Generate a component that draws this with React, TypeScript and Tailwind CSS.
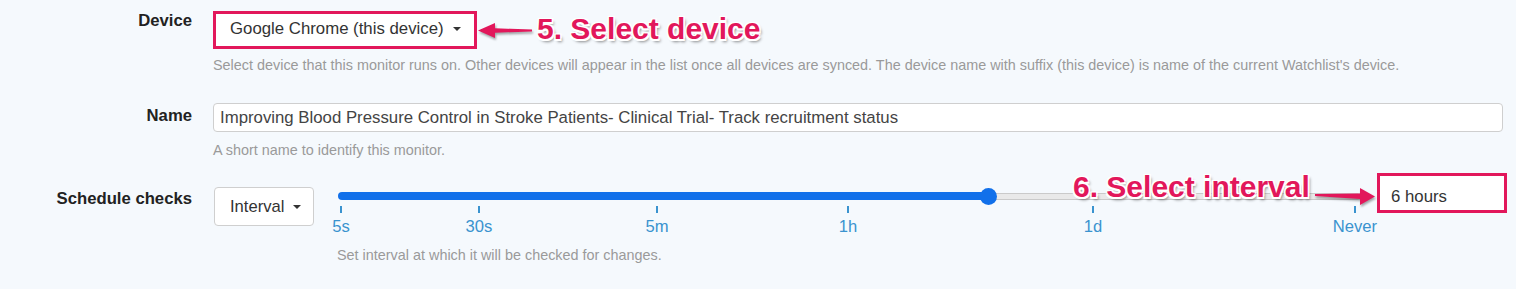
import React from "react";

const PINK = "border-[#e2175b]";

const ticks = [
  { label: "5s", x: 7 },
  { label: "30s", x: 145 },
  { label: "5m", x: 323 },
  { label: "1h", x: 514 },
  { label: "1d", x: 759 },
  { label: "Never", x: 1021 },
];

const THUMB = 654;

const Caret = () => (
  <span className="inline-block ml-[9px] w-0 h-0 border-t-[4.5px] border-t-[#333] border-x-[4px] border-x-transparent" />
);

const annotation =
  "absolute font-bold text-[#e2175b] leading-none whitespace-nowrap [text-shadow:-1.5px_-1.5px_0_#fff,1.5px_-1.5px_0_#fff,-1.5px_1.5px_0_#fff,1.5px_1.5px_0_#fff,0_-1.5px_0_#fff,0_1.5px_0_#fff,2px_3px_3px_rgba(0,0,0,0.45)]";

export default function App() {
  return (
    <div className="relative w-[1516px] h-[289px] overflow-hidden bg-[#f5f9fd] font-['Liberation_Sans',Arial,sans-serif] text-[#333]">
      {/* Device */}
      <div className="flex items-start pt-[11px]">
        <div className="w-[192px] text-right text-[16.7px] font-bold leading-[20px] text-[#222]">
          Device
        </div>
        <div className="ml-[21px]">
          <div className={`flex h-[38px] w-[264px] items-start border-[3px] ${PINK} bg-white pl-[14px] pt-[5px]`}>
            <span className="flex items-center text-[16.8px] leading-[20px] text-[#333]">
              Google Chrome (this device)
              <Caret />
            </span>
          </div>
          <p className="mt-[7px] text-[14.4px] leading-[18px] text-[#9a9a9a] whitespace-nowrap">
            Select device that this monitor runs on. Other devices will appear in the list once all devices are synced. The device name with suffix (this device) is name of the current Watchlist's device.
          </p>
        </div>
      </div>

      {/* Name */}
      <div className="mt-[29px] flex items-start">
        <div className="mt-[2.5px] w-[192px] text-right text-[16.7px] font-bold leading-[20px] text-[#222]">
          Name
        </div>
        <div className="ml-[21px]">
          <input
            readOnly
            value="Improving Blood Pressure Control in Stroke Patients- Clinical Trial- Track recruitment status"
            className="block h-[29px] w-[1290px] rounded-[4px] border border-[#cfcfcf] bg-white px-[6px] pt-[1px] text-[16.8px] text-[#444] outline-none"
          />
          <p className="mt-[9px] text-[14.4px] leading-[18px] text-[#9a9a9a]">
            A short name to identify this monitor.
          </p>
        </div>
      </div>

      {/* Schedule checks */}
      <div className="mt-[14px] flex items-start">
        <div className="mt-[15.5px] w-[192px] text-right text-[16.7px] font-bold leading-[20px] text-[#222]">
          Schedule checks
        </div>
        <div className="ml-[22px] mt-[14px] flex h-[39px] w-[100px] items-center rounded-[4px] border border-[#cfcfcf] bg-white pl-[15px]">
          <span className="flex items-center text-[16.6px] leading-[20px] text-[#333]">
            Interval
            <Caret />
          </span>
        </div>

        <div className="ml-[20px] w-[1028px]">
          <div className="relative h-[61px]">
            <div
              className="absolute top-[20px] right-0 h-[7px] rounded-r-full border border-[#cacaca] bg-[#e9e9e9]"
              style={{ left: THUMB }}
            />
            <div
              className="absolute top-[19px] left-[4px] h-[8px] rounded-full bg-[#1170ea]"
              style={{ width: THUMB - 4 }}
            />
            <div
              className="absolute top-[14.5px] h-[17px] w-[17px] rounded-full bg-[#1170ea]"
              style={{ left: THUMB - 8.5 }}
            />
            {ticks.map((t) => (
              <React.Fragment key={t.label}>
                <div
                  className="absolute top-[33px] h-[7px] w-[2px] bg-[#3a93cf]"
                  style={{ left: t.x - 1 }}
                />
                <div
                  className="absolute top-[45px] w-[80px] text-center text-[16.6px] leading-[18px] text-[#3a93cf]"
                  style={{ left: t.x - 40 }}
                >
                  {t.label}
                </div>
              </React.Fragment>
            ))}
          </div>
          <p className="mt-[12px] pl-[3px] text-[14.4px] leading-[18px] text-[#9a9a9a]">
            Set interval at which it will be checked for changes.
          </p>
        </div>

        <div className={`ml-[15px] flex h-[40px] w-[130px] items-start border-[3px] ${PINK} bg-white pl-[11px] pt-[10.5px]`}>
          <span className="text-[16.8px] leading-[20px] text-[#333]">6 hours</span>
        </div>
      </div>

      {/* Annotations */}
      <div className={`${annotation} left-[537px] top-[14px] text-[30px]`}>5. Select device</div>
      <svg
        className="absolute left-[474px] top-[19px] drop-shadow-[1px_2px_1px_rgba(0,0,0,0.35)]"
        width="62"
        height="24"
        viewBox="0 0 62 24"
      >
        <path d="M4 11.5 L21 4 L21 9.3 L58 10.6 L58 12.4 L21 13.7 L21 19 Z" fill="#e2175b" />
      </svg>

      <div className={`${annotation} left-[1073px] top-[172px] text-[30px]`}>6. Select interval</div>
      <svg
        className="absolute left-[1310px] top-[184px] drop-shadow-[1px_2px_1px_rgba(0,0,0,0.35)]"
        width="70"
        height="26"
        viewBox="0 0 70 26"
      >
        <path d="M5 10 L50 9.5 L50 4 L65 12.5 L50 21 L50 15 L5 12 Z" fill="#e2175b" />
      </svg>
    </div>
  );
}
